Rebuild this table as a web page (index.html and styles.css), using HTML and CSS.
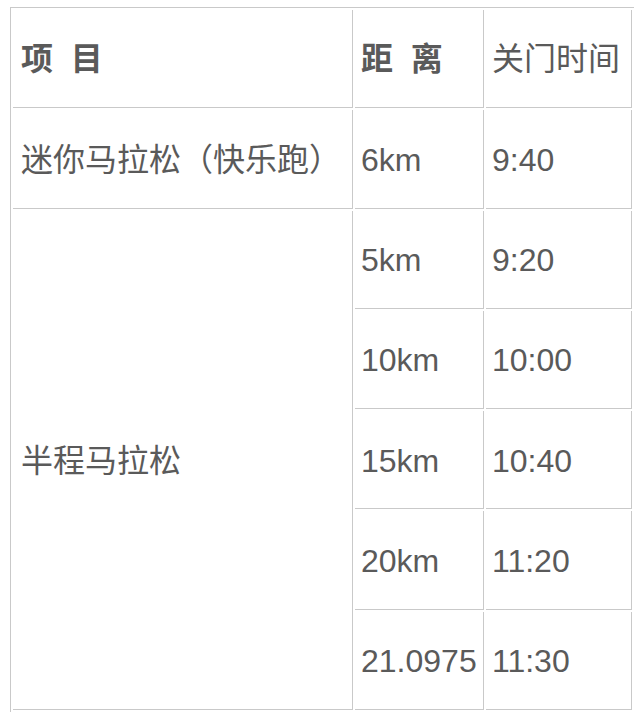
FILE: index.html
```html
<!DOCTYPE html>
<html lang="zh">
<head>
<meta charset="utf-8">
<title>关门时间</title>
<link rel="stylesheet" href="styles.css">
</head>
<body>
<table class="schedule">
  <tbody>
    <tr>
      <td class="c1"><strong>项&nbsp;&nbsp;目</strong></td>
      <td class="c2"><strong>距&nbsp;&nbsp;离</strong></td>
      <td class="c3">关门时间</td>
    </tr>
    <tr>
      <td class="c1">迷你马拉松（快乐跑）</td>
      <td class="c2">6km</td>
      <td class="c3">9:40</td>
    </tr>
    <tr>
      <td class="c1" rowspan="5">半程马拉松</td>
      <td class="c2">5km</td>
      <td class="c3">9:20</td>
    </tr>
    <tr>
      <td class="c2">10km</td>
      <td class="c3">10:00</td>
    </tr>
    <tr>
      <td class="c2">15km</td>
      <td class="c3">10:40</td>
    </tr>
    <tr>
      <td class="c2">20km</td>
      <td class="c3">11:20</td>
    </tr>
    <tr>
      <td class="c2">21.0975</td>
      <td class="c3">11:30</td>
    </tr>
  </tbody>
</table>
</body>
</html>
```
FILE: styles.css
```css
html, body {
  margin: 0;
  padding: 0;
  background: #ffffff;
}

body {
  padding: 7px 0 0 10px;
  font-family: "Liberation Sans", "Noto Sans CJK SC", sans-serif;
  color: #5a5a5a;
}

.schedule {
  border-collapse: separate;
  border-spacing: 2px;
  border-top: 1px solid #c9c9c9;
  border-left: 1px solid #c9c9c9;
  table-layout: fixed;
  font-size: 32px;
  line-height: 1.2;
}

.schedule td {
  box-sizing: border-box;
  height: 98.3px;
  padding: 2px 5px 0;
  border-right: 1px solid #c9c9c9;
  border-bottom: 1px solid #c9c9c9;
  vertical-align: middle;
  white-space: nowrap;
  overflow: hidden;
}

.schedule strong {
  font-weight: bold;
}

.schedule .c1 {
  width: 340px;
  padding-left: 8px;
}

.schedule .c2 {
  width: 129px;
  padding-left: 6px;
}

.schedule .c3 {
  width: 146px;
  padding-left: 6px;
}
```
